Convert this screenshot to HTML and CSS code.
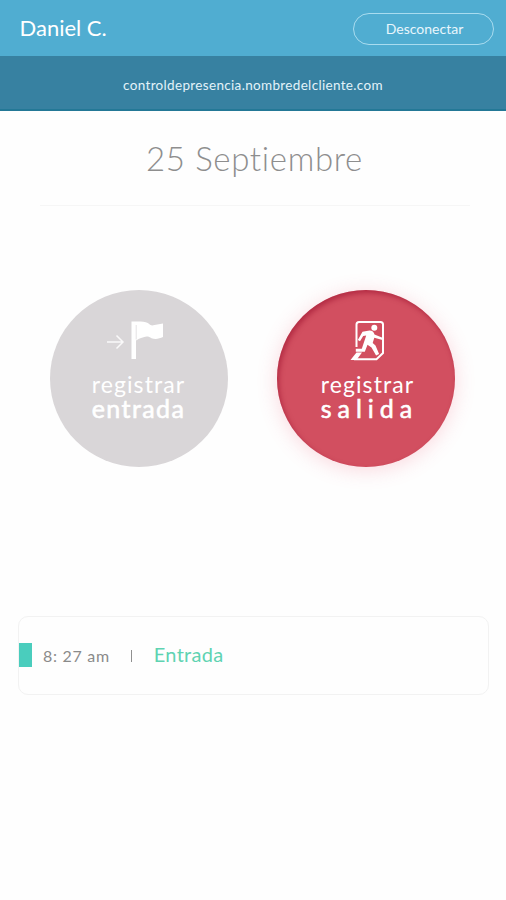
FILE: index.html
```html
<!DOCTYPE html>
<html lang="es">
<head>
  <meta charset="UTF-8">
  <meta name="viewport" content="width=device-width, initial-scale=1.0">
  <title>Control de presencia</title>
  <link rel="stylesheet" href="styles.css">
</head>
<body>

  <header class="topbar">
    <span class="user">Daniel C.</span>
    <button class="logout" type="button">Desconectar</button>
  </header>
  <div class="domain"><span>controldepresencia.nombredelcliente.com</span></div>

  <main>
    <h1><span>25 Septiembre</span></h1>

    <!-- Check in / check out -->
    <div class="actions">
      <button class="circle circle-in" type="button">
        <svg class="icon" width="60" height="44" viewBox="0 0 60 44">
          <path d="M-2 24h15M7.500 17.500L14 24l-6.500 6.500" fill="none" stroke="#fff" stroke-opacity=".85" stroke-width="1.500"/>
          <path d="M22.500 3.500h9c4 .2 7 .8 9 2.800 1 1.200 2.500 1.400 5 .8l8.500-1.500v13.500c-4 2-8 2.200-11.500 1.200-2.500-2-5-2-8-1.100-3.500 1-6 2-7.500 3.300V41h-4.500z" fill="#fff"/>
          <path d="M27.200 7v14.500" stroke="#d9d6d8" stroke-width=".7"/>
        </svg>
        <span class="line1">registrar</span>
        <span class="line2">entrada</span>
      </button>
      <button class="circle circle-out" type="button">
        <svg class="icon" width="60" height="44" viewBox="0 0 60 44">
          <path d="M20.500 29V6.500q0-2.500 2.500-2.500h21.500q2.500 0 2.500 2.500V35l-6.500 6.200H18" fill="none" stroke="#fff" stroke-width="2"/>
          <path d="M20.500 34.500h5.500L20.500 42H14.500z" fill="#fff"/>
          <circle cx="38.300" cy="9.700" r="3" fill="#fff"/>
          <path d="M26.500 13.800l7-1.300c3 0 4.200 1.500 5 4l8 3.200v2.300l-8.200-2.300-1.600 5.200 2.800 2.700 3.600 8.300-3 1.700-4.600-8-4-2.800-2.700 6.900h-9v-3h6l4.400-13.200-3 .6-3.200 5.200-2.200-1.200z" fill="#fff"/>
        </svg>
        <span class="line1">registrar</span>
        <span class="line2">salida</span>
      </button>
    </div>

    <!-- Last record -->
    <div class="record">
      <span class="mark"></span>
      <span class="time">8: 27 am</span>
      <span class="separator"></span>
      <span class="type">Entrada</span>
    </div>
  </main>

</body>
</html>
```

FILE: styles.css
```css
* {
  box-sizing: border-box;
}
body {
  margin: 0;
  min-height: 900px;
  font-family: Lato, "Liberation Sans", sans-serif;
  font-variant-ligatures: none;
  background: #fefefe;
}
button {
  font-family: inherit;
  font-variant-ligatures: none;
  color: #fff;
  cursor: pointer;
}
.topbar {
  display: flex;
  justify-content: space-between;
  align-items: center;
  height: 56px;
  padding: 1px 12px 0 19.5px;
  background: #50add1;
  color: #fff;
}
.user {
  padding-bottom: 2px;
  font-size: 22px;
  line-height: 28px;
}
.logout {
  width: 141px;
  height: 32px;
  padding: 0 0 1px 2px;
  border: 1px solid #a9dcef;
  border-radius: 16px;
  background: none;
  color: #e8f6fc;
  font-size: 14px;
}
.domain {
  height: 55px;
  padding-top: 19px;
  border-bottom: 2px solid #237896;
  background: #3781a1;
  color: #e3f3fa;
  font-size: 13.5px;
  line-height: 20px;
  letter-spacing: 0.33px;
  text-align: center;
}
h1 {
  height: 95px;
  margin: 0 36px 0 40px;
  padding: 27px 1px 0 0;
  border-bottom: 1px solid #f6f6f6;
  color: #8e8e8e;
  font-size: 33px;
  font-weight: 300;
  line-height: 40px;
  letter-spacing: 0.65px;
  text-align: center;
}
.actions {
  display: flex;
  justify-content: space-between;
  margin-top: 84px;
  padding: 0 51px 0 50px;
}
.circle {
  display: flex;
  flex-direction: column;
  align-items: center;
  width: 178px;
  height: 177px;
  padding: 28px 0 0;
  border: none;
  border-radius: 50%;
}
.circle-in {
  background: #d9d6d8;
}
.circle-out {
  background: #d24f60;
  box-shadow: 0 3px 20px rgba(235, 80, 110, 0.22), inset 2px 3px 5px rgba(150, 10, 40, 0.5);
}
.icon {
  display: block;
  overflow: visible;
}
.line1 {
  margin-top: 11px;
  margin-right: 1px;
  font-size: 23px;
  line-height: 23px;
  letter-spacing: 1.1px;
}
.line2 {
  margin-right: 1px;
  font-size: 25px;
  line-height: 24px;
  letter-spacing: 1.4px;
  -webkit-text-stroke: 0.6px #fff;
}
.circle-out .line1 {
  margin-right: -3px;
}
.circle-out .line2 {
  margin-right: -7px;
  letter-spacing: 6px;
}
.record {
  display: flex;
  align-items: center;
  height: 79px;
  margin: 149px 17px 0 18px;
  border: 1px solid #f2f2f2;
  border-radius: 10px;
}
.mark {
  width: 13px;
  height: 24px;
  margin-bottom: 1px;
  background: #4acdbd;
}
.time {
  margin-left: 11px;
  color: #8a8a8a;
  font-size: 16px;
  letter-spacing: 0.7px;
}
.separator {
  width: 1px;
  height: 12px;
  margin-left: 21px;
  background: #909090;
}
.type {
  margin-left: 22px;
  padding-bottom: 3px;
  color: #5fd3b2;
  font-size: 20px;
  letter-spacing: 0.3px;
}
```
